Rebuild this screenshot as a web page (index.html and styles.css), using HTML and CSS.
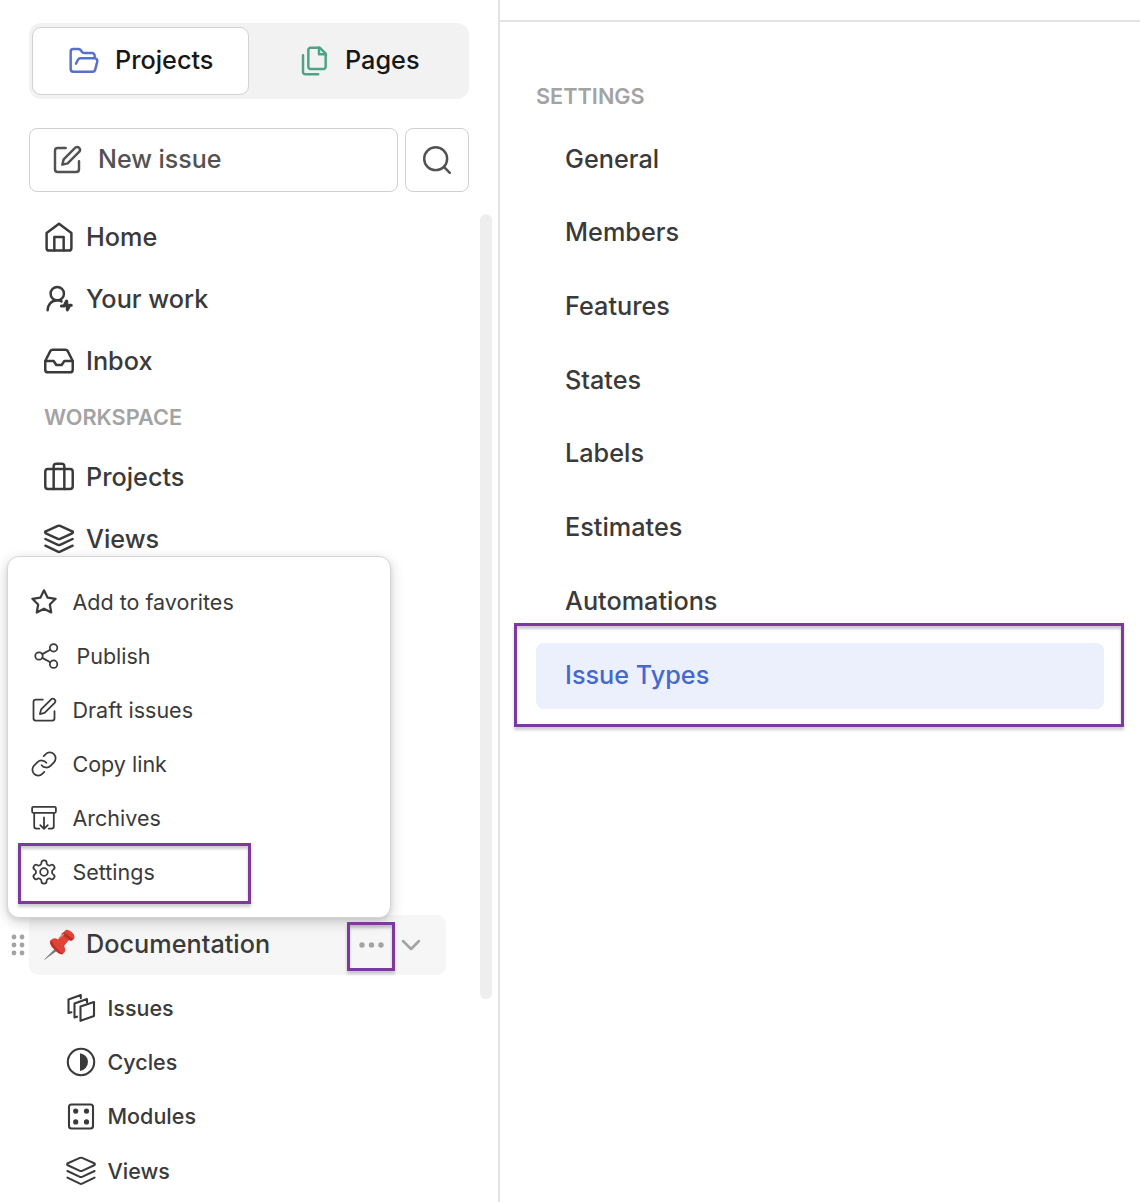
FILE: index.html
```html
<!DOCTYPE html>
<html lang="en">
<head>
<meta charset="utf-8">
<title>Project settings</title>
<link rel="stylesheet" href="styles.css">
</head>
<body>
<svg class="defs" aria-hidden="true">
  <symbol id="pen" viewBox="0 0 24 24"><path d="M11 3H5a2 2 0 0 0-2 2v14a2 2 0 0 0 2 2h14a2 2 0 0 0 2-2v-6"/><path d="M18.4 2.6a2.17 2.17 0 0 1 3 3L12.5 14.5 8.5 15.5l1-4Z"/></symbol>
  <symbol id="layers" viewBox="0 0 24 24"><path d="m12.83 2.18a2 2 0 0 0-1.66 0L2.1 6.2a.8.8 0 0 0 0 1.500l9.080 4.200a2 2 0 0 0 1.650 0l9.080-4.200a.8.8 0 0 0 0-1.500Z"/><path d="m22.200 12-9.370 4.350a2 2 0 0 1-1.660 0L1.800 12"/><path d="m22.200 17-9.370 4.500a2 2 0 0 1-1.660 0L1.800 17"/></symbol>
</svg>
<div class="app">
  <aside class="sidebar">
    <div class="tabs">
      <div class="tab tab-active">
        <svg class="icon blue" width="32" height="32" viewBox="0 0 24 24"><path d="m6 14 1.5-2.9A2 2 0 0 1 9.24 10H20a2 2 0 0 1 1.94 2.5l-1.54 6a2 2 0 0 1-1.95 1.5H4a2 2 0 0 1-2-2V5a2 2 0 0 1 2-2h3.9a2 2 0 0 1 1.69.9l.81 1.2a2 2 0 0 0 1.67.9H18a2 2 0 0 1 2 2v2"/></svg>
        <span>Projects</span>
      </div>
      <div class="tab tab-pages">
        <svg class="icon green" width="32" height="32" viewBox="0 0 24 24"><path d="M15.5 2H8.600c-.4 0-.8.2-1.100.5-.3.3-.5.7-.5 1.100v12.800c0 .4.2.8.5 1.100.3.3.7.5 1.100.5h9.800c.4 0 .8-.2 1.100-.5.3-.3.5-.7.5-1.100V6.500L15.500 2z"/><path d="M3 7.600v12.800c0 .4.2.8.5 1.100.3.3.7.5 1.100.5h9.800"/><path d="M15 2v5h5"/></svg>
        <span>Pages</span>
      </div>
    </div>
    <div class="actions">
      <div class="new-issue"><svg class="icon" width="32" height="32"><use href="#pen"/></svg><span>New issue</span></div>
      <div class="search"><svg class="icon" width="32" height="32" viewBox="0 0 24 24"><circle cx="11" cy="11" r="8.600"/><path d="m21.600 21.600-4.400-4.400"/></svg></div>
    </div>
    <nav class="nav">
      <div class="row"><svg class="icon" width="32" height="32" viewBox="0 0 24 24"><path d="m2.700 9 9.300-7 9.300 7v11.200a2 2 0 0 1-2 2H4.700a2 2 0 0 1-2-2z"/><path d="M8.500 22V12h7v10"/></svg><span>Home</span></div>
      <div class="row"><svg class="icon" width="32" height="32" viewBox="0 0 24 24"><circle cx="10.700" cy="8" r="5"/><path d="M3.500 20.500c0-4.300 3-7.600 7.200-7.600 1.300 0 2.300.3 3.200.900"/><path d="M13.800 17.200h2l1.900-3.700.6 6.700 1.700-3.500h1.200" stroke-width="2.300"/></svg><span>Your work</span></div>
      <div class="row"><svg class="icon" width="32" height="32" viewBox="0 0 24 24"><path d="M22.300 12H16l-2 3h-4l-2-3H1.700"/><path d="M5.450 4.600 1.700 12v6.500a2 2 0 0 0 2 2h16.600a2 2 0 0 0 2-2V12l-3.750-7.400a2 2 0 0 0-1.790-1.100H7.240a2 2 0 0 0-1.790 1.100z"/></svg><span>Inbox</span></div>
      <h2 class="heading">WORKSPACE</h2>
      <div class="row"><svg class="icon" width="32" height="32" viewBox="0 0 24 24"><rect x="1.700" y="6" width="20.600" height="15" rx="2"/><path d="M16 21V4a2 2 0 0 0-2-2h-4a2 2 0 0 0-2 2V21"/></svg><span>Projects</span></div>
      <div class="row"><svg class="icon" width="32" height="32"><use href="#layers"/></svg><span>Views</span></div>
    </nav>
    <section class="project">
      <div class="project-head">
        <svg class="pin" width="32" height="32" viewBox="0 0 32 32"><path d="M1.500 30.500 14 18l2 2z" fill="#777" stroke="#777" stroke-width=".5"/><path d="M21 3q2-4 7-.5t3 7.500q-2 3-5 1l-5 6q3 5-1 8-3 1-6.500-2.500L9 18q-3.500-5-1-7 3-3 7-.5z" fill="#df4436"/><path d="m21 3 9 7q-2 3-4 1l-8-6z" fill="#ba3029"/><path d="M8 11q5 9 12 14-4 1-7-3l-4-4q-3-4-1-7z" fill="#bd3129"/><path d="m16 9 5-4" stroke="#f3897b" stroke-width="1.500"/></svg>
        <span class="project-name">Documentation</span>
        <svg class="dots" width="26" height="6"><circle cx="3" cy="3" r="2.700"/><circle cx="12.500" cy="3" r="2.700"/><circle cx="22" cy="3" r="2.700"/></svg>
        <svg class="icon chevron" width="20" height="12" viewBox="0 0 20 12"><path d="m2 2 8 8 8-8"/></svg>
      </div>
      <div class="sub"><svg class="icon" width="32" height="32" viewBox="0 0 32 32"><path d="M15.500 14.500 29 10v14l-13.500 4.800zM9.500 25.500V11.500L22 7v3.300M9.500 25.500l2.600-.8M3.500 21V7.500L15.800 3v3.300M3.500 21l3-.8"/></svg><span>Issues</span></div>
      <div class="sub"><svg class="icon" width="32" height="32" viewBox="0 0 32 32"><circle cx="16" cy="16" r="13.200"/><path class="solid" d="M15 7.200a8.900 8.900 0 0 1 0 17.700z"/></svg><span>Cycles</span></div>
      <div class="sub"><svg class="icon" width="32" height="32" viewBox="0 0 32 32"><rect x="4" y="4.500" width="24" height="24" rx="2.500"/><g class="solid"><circle cx="10.700" cy="11.100" r="2.600"/><circle cx="21.500" cy="11.100" r="2.600"/><circle cx="10.700" cy="21.900" r="2.600"/><circle cx="21.500" cy="21.900" r="2.600"/></g></svg><span>Modules</span></div>
      <div class="sub last"><svg class="icon thin" width="32" height="32"><use href="#layers"/></svg><span>Views</span></div>
    </section>
    <svg class="grip" width="14" height="22"><circle cx="3" cy="3" r="2.400"/><circle cx="11" cy="3" r="2.400"/><circle cx="3" cy="11" r="2.400"/><circle cx="11" cy="11" r="2.400"/><circle cx="3" cy="19" r="2.400"/><circle cx="11" cy="19" r="2.400"/></svg>
    <div class="scrollbar"></div>
    <div class="menu">
      <div class="item"><svg class="icon bold" width="28" height="28" viewBox="0 0 24 24"><path d="m12 2 3.090 6.260L22 9.270l-5 4.870 1.180 6.880L12 17.770l-6.180 3.250L7 14.140 2 9.270l6.910-1.010L12 2z"/></svg><span>Add to favorites</span></div>
      <div class="item publish"><svg class="icon" width="28" height="28" viewBox="0 0 24 24"><circle cx="18.500" cy="5" r="3.200"/><circle cx="6" cy="12" r="3.200"/><circle cx="18.500" cy="19" r="3.200"/><path d="m8.800 13.600 6.900 3.800M15.700 6.600l-6.900 3.800"/></svg><span>Publish</span></div>
      <div class="item"><svg class="icon" width="28" height="28"><use href="#pen"/></svg><span>Draft issues</span></div>
      <div class="item"><svg class="icon" width="28" height="28" viewBox="0 0 24 24"><path d="M10 13a5 5 0 0 0 7.540.540l3-3a5 5 0 0 0-7.070-7.070l-1.720 1.710"/><path d="M14 11a5 5 0 0 0-7.540-.540l-3 3a5 5 0 0 0 7.070 7.070l1.710-1.710"/></svg><span>Copy link</span></div>
      <div class="item"><svg class="icon" width="28" height="28" viewBox="0 0 24 24"><rect x="1.800" y="2.500" width="20.400" height="5" rx="1"/><path d="M3.600 7.500V19a2 2 0 0 0 2 2H8M20.400 7.500V19a2 2 0 0 1-2 2H16M12 11.500v9.800M8.800 18.200l3.200 3.200 3.200-3.200"/></svg><span>Archives</span></div>
      <div class="item"><svg class="icon" width="28" height="28" viewBox="0 0 24 24"><path d="M12.220 2h-.440a2 2 0 0 0-2 2v.180a2 2 0 0 1-1 1.730l-.430.250a2 2 0 0 1-2 0l-.150-.080a2 2 0 0 0-2.730.730l-.220.380a2 2 0 0 0 .730 2.730l.150.100a2 2 0 0 1 1 1.720v.510a2 2 0 0 1-1 1.740l-.150.090a2 2 0 0 0-.730 2.730l.220.380a2 2 0 0 0 2.730.730l.150-.080a2 2 0 0 1 2 0l.430.250a2 2 0 0 1 1 1.730V20a2 2 0 0 0 2 2h.440a2 2 0 0 0 2-2v-.180a2 2 0 0 1 1-1.730l.430-.250a2 2 0 0 1 2 0l.150.080a2 2 0 0 0 2.730-.730l.220-.390a2 2 0 0 0-.730-2.730l-.150-.080a2 2 0 0 1-1-1.740v-.500a2 2 0 0 1 1-1.740l.150-.090a2 2 0 0 0 .730-2.730l-.220-.380a2 2 0 0 0-2.730-.730l-.150.080a2 2 0 0 1-2 0l-.430-.250a2 2 0 0 1-1-1.730V4a2 2 0 0 0-2-2z"/><circle cx="12" cy="12" r="3.300"/></svg><span>Settings</span></div>
    </div>
    <div class="mark mark-settings"></div>
    <div class="mark mark-dots"></div>
  </aside>
  <main class="content">
    <div class="topbar"></div>
    <h2 class="heading">SETTINGS</h2>
    <ul class="settings">
      <li>General</li>
      <li>Members</li>
      <li>Features</li>
      <li>States</li>
      <li>Labels</li>
      <li>Estimates</li>
      <li>Automations</li>
      <li class="selected">Issue Types</li>
    </ul>
    <div class="mark mark-types"></div>
  </main>
</div>
</body>
</html>
```
FILE: styles.css
```css
* { box-sizing: border-box; }
body { margin: 0; background: #fff; color: #3a3a3a; font: 450 25.250px/32px Inter, sans-serif; }
.defs { position: absolute; width: 0; height: 0; }
.app { display: flex; height: 1202px; overflow: hidden; }
.icon { display: block; flex: none; overflow: visible; fill: none; stroke: currentColor; stroke-width: 1.850; stroke-linecap: round; stroke-linejoin: round; }
span { white-space: nowrap; }

.sidebar { position: relative; width: 500px; flex: none; padding: 23px 29px 0; border-right: 2px solid #e3e3e3; }
.tabs { display: flex; width: 440px; height: 76px; padding: 4px 3px; border-radius: 12px; background: #f2f2f2; color: #171717; font-weight: 500; }
.tab { display: flex; align-items: center; height: 68px; gap: 15px; }
.tab span, .new-issue span { padding-bottom: 2px; }
.tab-active { width: 217px; padding-left: 35px; border: 1px solid #d2d2d2; border-radius: 9px; background: #fff; }
.tab-pages { padding-left: 50px; gap: 14px; }
.blue { color: #5670cc; }
.green { color: #4ba488; }
.actions { display: flex; gap: 7px; margin-top: 29px; color: #525252; }
.new-issue, .search { display: flex; align-items: center; height: 64px; border: 1px solid #d0d0d0; border-radius: 8px; }
.new-issue { width: 369px; padding-left: 21px; gap: 15px; font-size: 25px; }
.search { width: 64px; justify-content: center; }

.nav { display: flex; flex-direction: column; margin-top: 14px; }
.row { display: flex; align-items: center; height: 62px; padding-left: 14px; gap: 11px; }
.heading { margin: 0; font-size: 21.700px; font-weight: 600; line-height: 30px; color: #a3a3a3; }
.nav .heading { height: 54px; padding: 10px 0 0 15px; }

.project { margin-top: 345px; }
.project-head { display: flex; align-items: center; width: 417px; height: 60px; padding-left: 14px; border-radius: 9px; background: #f6f6f6; }
.project-name { width: 273px; margin-left: 11px; padding-bottom: 2px; }
.dots, .grip { display: block; flex: none; fill: #a3a3a3; }
.chevron { margin-left: 16px; color: #a3a3a3; stroke-width: 2.500; }
.sub { display: flex; align-items: center; height: 54px; padding-left: 36px; gap: 10.500px; font-size: 21.500px; }
.project-head + .sub { margin-top: 6px; }
.last { margin-top: 1px; }
.sub .icon { stroke-width: 2.100; }
.sub .thin { stroke-width: 1.500; }
.solid { fill: currentColor; stroke: none; }
.grip { position: absolute; left: 11px; top: 934px; }
.scrollbar { position: absolute; left: 480px; top: 214px; width: 12px; height: 785px; border-radius: 6px; background: #eee; }

.menu { position: absolute; left: 7px; top: 556px; width: 384px; height: 362px; padding: 18px 23px; border: 1px solid #d6d6d6; border-radius: 12px; background: #fff; box-shadow: 0 4px 14px rgba(0,0,0,.18), 0 2px 4px rgba(0,0,0,.08); font-size: 21.500px; font-weight: 400; }
.item { display: flex; align-items: center; height: 54px; gap: 14.500px; margin-left: -1px; }
.item .icon { stroke-width: 1.500; }
.item .bold { stroke-width: 1.900; }
.publish { padding-left: 2px; gap: 16.500px; }

.mark { position: absolute; border: 3px solid #7c3a9e; box-shadow: 0 3px 3px rgba(0,0,0,.2), inset 0 3px 3px rgba(0,0,0,.2); }
.mark-settings { left: 18px; top: 843px; width: 233px; height: 61px; }
.mark-dots { left: 347px; top: 922px; width: 48px; height: 49px; }
.mark-types { left: 14px; top: 623px; width: 610px; height: 104px; }

.content { position: relative; flex: 1; }
.topbar { height: 22px; border-bottom: 2px solid #e3e3e3; }
.content > .heading { margin: 59px 0 0 36px; }
.settings { list-style: none; margin: 15.500px 36px 0; padding: 0; }
.settings li { height: 66px; margin-bottom: 7.720px; padding-left: 29px; border-radius: 8px; line-height: 64px; }
.settings .selected { background: #ecf0fd; color: #4568ce; }
```
